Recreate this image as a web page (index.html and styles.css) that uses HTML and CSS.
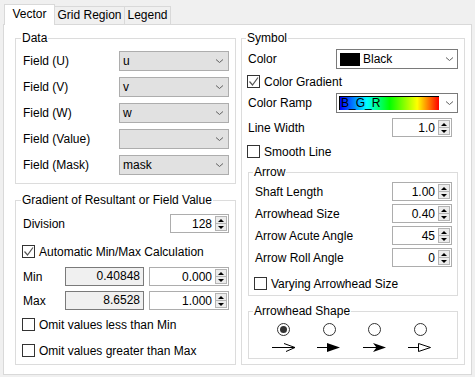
FILE: index.html
```html
<!DOCTYPE html>
<html lang="en">
<head>
    <meta charset="UTF-8">
    <meta name="viewport" content="width=device-width, initial-scale=1.0">
    <title>Vector Properties</title>
    <link rel="stylesheet" href="styles.css">
</head>
<body>
    <div class="tabs">
        <div class="tab active">Vector</div>
        <div class="tab tab-grid">Grid Region</div>
        <div class="tab tab-legend">Legend</div>
    </div>

    <div class="panel">
        <!-- left column -->
        <div class="col">
            <fieldset class="group data">
                <legend>Data</legend>
                <div class="frow"><span>Field (U)</span><div class="combo">u<svg class="chev" width="7" height="4" viewBox="0 0 7 4"><path d="M0 0.5L3.5 3.5L7 0.5"/></svg></div></div>
                <div class="frow"><span>Field (V)</span><div class="combo">v<svg class="chev" width="7" height="4" viewBox="0 0 7 4"><path d="M0 0.5L3.5 3.5L7 0.5"/></svg></div></div>
                <div class="frow"><span>Field (W)</span><div class="combo">w<svg class="chev" width="7" height="4" viewBox="0 0 7 4"><path d="M0 0.5L3.5 3.5L7 0.5"/></svg></div></div>
                <div class="frow"><span>Field (Value)</span><div class="combo"><svg class="chev" width="7" height="4" viewBox="0 0 7 4"><path d="M0 0.5L3.5 3.5L7 0.5"/></svg></div></div>
                <div class="frow"><span>Field (Mask)</span><div class="combo">mask<svg class="chev" width="7" height="4" viewBox="0 0 7 4"><path d="M0 0.5L3.5 3.5L7 0.5"/></svg></div></div>
            </fieldset>

            <fieldset class="group gradient">
                <legend>Gradient of Resultant or Field Value</legend>
                <div class="srow"><span>Division</span>
                    <div class="spin"><span class="val">128</span><span class="updown"><i class="up"></i><i class="dn"></i></span></div>
                </div>
                <div class="crow auto">
                    <span class="box"><svg width="11" height="11" viewBox="0 0 11 11"><path d="M1.5 5.5L4.5 9L10 1.5"/></svg></span>Automatic Min/Max Calculation
                </div>
                <div class="mrow first"><span>Min</span><div class="ro">0.40848</div>
                    <div class="spin"><span class="val">0.000</span><span class="updown"><i class="up"></i><i class="dn"></i></span></div>
                </div>
                <div class="mrow"><span>Max</span><div class="ro">8.6528</div>
                    <div class="spin"><span class="val">1.000</span><span class="updown"><i class="up"></i><i class="dn"></i></span></div>
                </div>
                <div class="crow omit-min"><span class="box"></span>Omit values less than Min</div>
                <div class="crow omit-max"><span class="box"></span>Omit values greater than Max</div>
            </fieldset>
        </div>

        <!-- right column -->
        <div class="col">
            <fieldset class="group symbol">
                <legend>Symbol</legend>
                <div class="frow"><span>Color</span>
                    <div class="combo white"><span class="swatch"></span>Black<svg class="chev" width="7" height="4" viewBox="0 0 7 4"><path d="M0 0.5L3.5 3.5L7 0.5"/></svg></div>
                </div>
                <div class="crow grad-check">
                    <span class="box"><svg width="11" height="11" viewBox="0 0 11 11"><path d="M1.5 5.5L4.5 9L10 1.5"/></svg></span>Color Gradient
                </div>
                <div class="frow ramp-row"><span>Color Ramp</span>
                    <div class="combo white ramp"><span class="ramp-bar">B_G_R</span><svg class="chev" width="7" height="4" viewBox="0 0 7 4"><path d="M0 0.5L3.5 3.5L7 0.5"/></svg></div>
                </div>
                <div class="srow line-width"><span>Line Width</span>
                    <div class="spin"><span class="val">1.0</span><span class="updown"><i class="up"></i><i class="dn"></i></span></div>
                </div>
                <div class="crow smooth"><span class="box"></span>Smooth Line</div>

                <fieldset class="group arrow">
                    <legend>Arrow</legend>
                    <div class="srow"><span>Shaft Length</span>
                        <div class="spin"><span class="val">1.00</span><span class="updown"><i class="up"></i><i class="dn"></i></span></div>
                    </div>
                    <div class="srow"><span>Arrowhead Size</span>
                        <div class="spin"><span class="val">0.40</span><span class="updown"><i class="up"></i><i class="dn"></i></span></div>
                    </div>
                    <div class="srow"><span>Arrow Acute Angle</span>
                        <div class="spin"><span class="val">45</span><span class="updown"><i class="up"></i><i class="dn"></i></span></div>
                    </div>
                    <div class="srow"><span>Arrow Roll Angle</span>
                        <div class="spin"><span class="val">0</span><span class="updown"><i class="up"></i><i class="dn"></i></span></div>
                    </div>
                    <div class="crow varying"><span class="box"></span>Varying Arrowhead Size</div>
                </fieldset>

                <fieldset class="group shape">
                    <legend>Arrowhead Shape</legend>
                    <div class="shapes">
                        <span class="radio on"></span>
                        <span class="radio"></span>
                        <span class="radio"></span>
                        <span class="radio"></span>
                    </div>
                    <div class="shapes heads">
                        <svg width="24" height="11" viewBox="0 0 24 11"><path d="M0 5.5H23M12 1.5L23 5.5L14 9.5" fill="none" stroke="#000"/></svg>
                        <svg width="24" height="11" viewBox="0 0 24 11"><path d="M0 5.5H11" stroke="#000"/><path d="M10 1L23 5.5L10 10Z" fill="#000"/></svg>
                        <svg width="24" height="11" viewBox="0 0 24 11"><path d="M0 5.5H14" stroke="#000"/><path d="M10 1L23 5.5L10 10L13.5 5.5Z" fill="#000"/></svg>
                        <svg width="24" height="11" viewBox="0 0 24 11"><path d="M0 5.5H10.5" stroke="#000"/><path d="M10.5 1.5L22.5 5.5L10.5 9.5Z" fill="#fff" stroke="#000"/></svg>
                    </div>
                </fieldset>
            </fieldset>
        </div>
    </div>
</body>
</html>
```

FILE: styles.css
```css
body {
    margin: 0;
    width: 475px;
    height: 377px;
    overflow: hidden;
    background: #f0f0f0;
    font-family: "Liberation Sans", Arial, sans-serif;
    font-size: 12px;
    color: #000;
}

/* tab strip */
.tabs {
    display: flex;
    align-items: flex-end;
    height: 24px;
    padding-left: 4px;
}
.tab {
    box-sizing: border-box;
    height: 18px;
    line-height: 17px;
    text-align: center;
    border-top: 1px solid #d9d9d9;
    border-right: 1px solid #d9d9d9;
    background: #f0f0f0;
}
.tab.active {
    width: 51px;
    height: 21px;
    line-height: 19px;
    margin-bottom: -1px;
    border-left: 1px solid #d9d9d9;
    background: #fff;
    position: relative;
    z-index: 1;
}
.tab-grid { width: 70px; }
.tab-legend { width: 46px; }

.panel {
    box-sizing: border-box;
    width: 469px;
    height: 351px;
    margin-left: 3px;
    border: 1px solid #d9d9d9;
    background: #fff;
    display: grid;
    grid-template-columns: 221px 224px;
    column-gap: 5px;
    align-items: start;
    padding: 6px 0 0 11px;
}
.col {
    display: flex;
    flex-direction: column;
}

/* group boxes */
.group {
    box-sizing: border-box;
    margin: 0;
    min-width: 0;
    border: 1px solid #dcdcdc;
    padding: 0;
}
.group legend {
    padding: 0 1px;
    margin-left: -2px;
    line-height: 14px;
}
.data {
    height: 153px;
    padding: 6px 6px 0 7px;
}
.gradient {
    height: 172px;
    margin-top: 9px;
    padding: 7px 6px 0 7px;
}
.symbol {
    height: 334px;
    padding: 4px 6px 0 6px;
}
.arrow {
    height: 131px;
    margin-top: 4px;
    padding: 3px 5px 0 6px;
}
.shape {
    height: 55px;
    margin-top: 8px;
    padding: 0 0 0 12px;
}
.shape legend { margin-left: -8px; }

/* rows */
.frow {
    display: grid;
    grid-template-columns: 1fr 110px;
    align-items: center;
    height: 20px;
}
.frow + .frow { margin-top: 6px; }
.symbol .frow { grid-template-columns: 1fr 122px; }
.symbol .ramp-row { margin-top: 2px; }

.srow {
    display: grid;
    grid-template-columns: 1fr 59px;
    align-items: center;
    height: 19px;
}
.symbol .srow { grid-template-columns: 1fr 60px; }
.line-width { margin-top: 5px; padding-right: 6px; }
.arrow .srow + .srow { margin-top: 3px; }

.mrow {
    display: grid;
    grid-template-columns: 42px 79px 1fr;
    align-items: center;
    height: 19px;
    margin-top: 5px;
}
.mrow .spin { margin-left: 5px; }
.mrow.first { margin-top: 6px; }

.crow {
    display: flex;
    align-items: center;
    height: 19px;
    margin-left: -1px;
}
.auto { margin-top: 9px; }
.omit-min { margin-top: 5px; }
.omit-max { margin-top: 7px; }
.grad-check { margin-top: 3px; }
.smooth { margin-top: 5px; }
.varying { margin-top: 7px; }

/* controls */
.combo {
    box-sizing: border-box;
    height: 20px;
    display: flex;
    align-items: center;
    padding: 0 5px 0 3px;
    border: 1px solid #adadad;
    background: #e1e1e1;
}
.combo.white {
    background: #fff;
    border-color: #7a7a7a;
    padding-right: 4px;
}
.combo.ramp { padding-left: 2px; }
.chev {
    margin-left: auto;
    fill: none;
    stroke: #606060;
}
.swatch {
    width: 20px;
    height: 13px;
    margin-right: 3px;
    background: #000;
}
.ramp-bar {
    box-sizing: border-box;
    width: 100px;
    height: 14px;
    line-height: 13px;
    padding-left: 1px;
    border-top: 1px solid #000;
    border-left: 1px solid #000;
    background: linear-gradient(to right, #0000ff 0%, #00ffff 27%, #00ff00 50%, #ffff00 78%, #ff0000 100%);
}

.spin {
    box-sizing: border-box;
    height: 19px;
    display: flex;
    justify-content: flex-end;
    border: 1px solid #adadad;
    background: #fff;
}
.spin .val {
    align-self: center;
    padding-right: 2px;
}
.updown {
    box-sizing: border-box;
    width: 12px;
    margin: 1px;
    display: flex;
    flex-direction: column;
    border: 1px solid #b4b4b4;
    background: #ececec;
}
.updown i {
    flex: 1;
    display: flex;
    align-items: center;
    justify-content: center;
}
.updown i + i { border-top: 1px solid #b4b4b4; }
.updown i::before {
    content: "";
    border-left: 3px solid transparent;
    border-right: 3px solid transparent;
}
.updown .up::before { border-bottom: 3px solid #000; }
.updown .dn::before { border-top: 3px solid #000; }

.ro {
    box-sizing: border-box;
    height: 19px;
    line-height: 17px;
    padding-right: 3px;
    text-align: right;
    border: 1px solid #7a7a7a;
    background: #f0f0f0;
}

.box {
    box-sizing: border-box;
    width: 13px;
    height: 13px;
    margin-right: 4px;
    border: 1px solid #333;
    background: #fff;
    display: flex;
}
.box svg {
    fill: none;
    stroke: #555;
    stroke-width: 1.2;
}

.shapes {
    display: grid;
    grid-template-columns: repeat(4, 45.5px);
    justify-items: center;
    align-items: center;
    height: 14px;
    margin-top: 4px;
}
.shapes.heads {
    height: 11px;
    margin-top: 6px;
}
.radio {
    box-sizing: border-box;
    width: 13px;
    height: 13px;
    border: 1px solid #333;
    border-radius: 50%;
    background: #fff;
    display: flex;
    align-items: center;
    justify-content: center;
}
.radio.on::after {
    content: "";
    width: 7px;
    height: 7px;
    border-radius: 50%;
    background: #333;
}
```
